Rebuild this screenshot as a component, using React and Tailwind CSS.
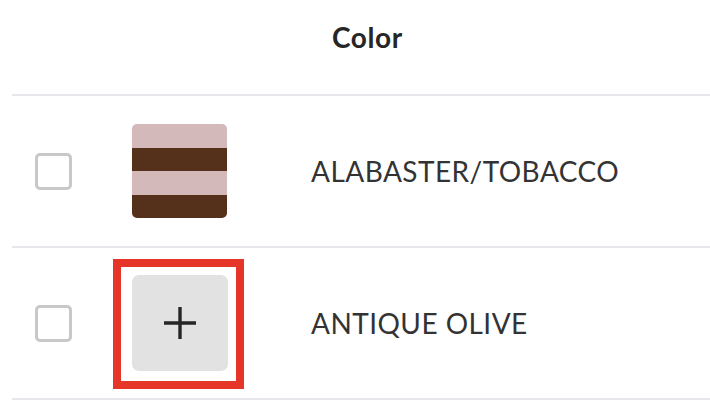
export default function App() {
  const rows = [
    { name: 'ALABASTER/TOBACCO', swatch: true },
    { name: 'ANTIQUE OLIVE', swatch: false },
  ];

  return (
    <div className="w-[710px] h-[414px] bg-white overflow-hidden" style={{ fontFamily: 'Lato, "Open Sans", sans-serif' }}>
      {/* Header */}
      <div className="ml-[12px] h-[96px] border-b-2 border-[#e6e6eb] pt-[20px] pl-[320px]">
        <span className="text-[28px] leading-[34px] font-bold tracking-[0.6px] text-[#262626]">Color</span>
      </div>

      {/* Rows */}
      {rows.map((row) => (
        <div key={row.name} className="ml-[12px] h-[152px] border-b-2 border-[#e6e6eb] flex items-center">
          {/* Checkbox */}
          <div className="w-[120px] pl-[23px]">
            <div className="w-[37px] h-[37px] border-[3px] border-[#c8c8c8] rounded-[5px] bg-white" />
          </div>

          {/* Swatch */}
          <div className="w-[179px]">
            {row.swatch ? (
              <div className="w-[95px] h-[94px] rounded-[5px] overflow-hidden flex flex-col">
                <div className="flex-1 bg-[#d4b9bb]" />
                <div className="flex-1 bg-[#55301a]" />
                <div className="flex-1 bg-[#d4b9bb]" />
                <div className="flex-1 bg-[#55301a]" />
              </div>
            ) : (
              <div className="relative w-[96px] h-[96px]">
                <div className="w-full h-full rounded-[7px] bg-[#e2e2e2] flex items-center justify-center">
                  <svg width="32" height="32" viewBox="0 0 32 32" fill="none">
                    <path d="M0 16H32M16 0V32" stroke="#262626" strokeWidth="3.4" />
                  </svg>
                </div>
                {/* Highlight annotation */}
                <div className="absolute -left-[19px] -right-[16px] -top-[16px] -bottom-[18px] border-[8px] border-[#e6362a]" />
              </div>
            )}
          </div>

          {/* Name */}
          <span className="text-[28px] leading-[34px] tracking-[0.45px] text-[#333333]">{row.name}</span>
        </div>
      ))}
    </div>
  );
}
